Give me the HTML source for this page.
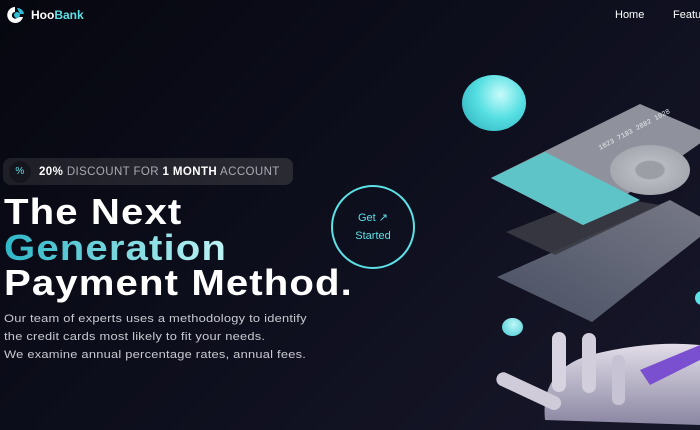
<!DOCTYPE html>
<html><head><meta charset="utf-8"><style>
*{margin:0;padding:0;box-sizing:border-box}
body{width:700px;height:430px;overflow:hidden;background:linear-gradient(135deg,#06070f 0%,#0d0e1c 45%,#17172a 100%);font-family:"Liberation Sans",sans-serif;color:#fff;position:relative}
.abs{position:absolute}
.logo{left:6px;top:6px;display:flex;align-items:center;gap:3px;font-weight:bold;font-size:12px}
.nav{top:9px;font-size:11px;color:#fff}
.badge{left:3px;top:158px;width:290px;height:27px;border-radius:8px;background:linear-gradient(90deg,#1e1f27,#2a2a33);display:flex;align-items:center;font-size:11.5px;letter-spacing:.4px;color:#a9abb3}
.badge b{color:#fff}
.h{left:4px;font-weight:bold;font-size:36.5px;letter-spacing:1px;line-height:36px;white-space:nowrap;transform:scaleX(1.1);transform-origin:left}
.p{left:4px;top:310px;font-size:11.3px;line-height:18px;color:#c8c9d0;letter-spacing:.2px;white-space:nowrap;transform:scaleX(1.14);transform-origin:left}
.btn{left:331px;top:185px;width:84px;height:84px;border-radius:50%;border:2px solid #5ce1e6;display:flex;align-items:center;justify-content:center;text-align:center;color:#5ce1e6;font-size:11px;line-height:18px}
</style></head><body>
<div class="abs logo"><svg width="22" height="18" viewBox="0 0 22 18"><path d="M9 1a8 8 0 1 0 8 10h-5a3.3 3.3 0 1 1-3-5z" fill="#fff"/><circle cx="11" cy="9" r="3" fill="#33bbcf"/><path d="M11 2a7 7 0 0 1 7 6h-4" fill="#33bbcf"/></svg><span>Hoo<span style="color:#5ce1e6">Bank</span></span></div>
<div class="abs nav" style="left:615px">Home</div>
<div class="abs nav" style="left:673px">Features</div>

<div class="abs badge"><span style="width:22px;height:22px;border-radius:50%;background:#15161d;margin:0 8px 0 6px;display:flex;align-items:center;justify-content:center;color:#5ce1e6;font-size:10px">%</span><span><b>20%</b> DISCOUNT FOR <b>1 MONTH</b> ACCOUNT</span></div>

<div class="abs h" style="top:194px">The Next</div>
<div class="abs h" style="top:230px;background:linear-gradient(90deg,#2fb7c7,#bff4f5);-webkit-background-clip:text;color:transparent">Generation</div>
<div class="abs h" style="top:265px">Payment Method.</div>
<div class="abs p">Our team of experts uses a methodology to identify<br>the credit cards most likely to fit your needs.<br>We examine annual percentage rates, annual fees.</div>

<div class="abs btn"><div>Get &#8599;<br>Started</div></div>

<div class="abs" style="left:462px;top:75px;width:64px;height:56px;border-radius:50%;background:radial-gradient(circle at 60% 35%,#c8fbfb,#55dfe2 45%,#2aa9b8)"></div>
<div class="abs" style="left:502px;top:318px;width:21px;height:18px;border-radius:50%;background:radial-gradient(circle at 55% 35%,#bdf8f8,#43c9d2)"></div>

<svg class="abs" style="left:0;top:0" width="700" height="430">
<defs>
<linearGradient id="g3" x1="0" y1="1" x2="1" y2="0"><stop offset="0" stop-color="#5a6478"/><stop offset="1" stop-color="#9a9ca8"/></linearGradient>
<radialGradient id="ring"><stop offset=".3" stop-color="#8e9099"/><stop offset=".4" stop-color="#b8bac1"/><stop offset="1" stop-color="#a6a8b0"/></radialGradient>
<linearGradient id="hand" x1="0" y1="0" x2="0" y2="1"><stop offset="0" stop-color="#e2dde8"/><stop offset="1" stop-color="#8a86a2"/></linearGradient>
</defs>
<!-- bottom card -->
<polygon points="497,277 670,200 715,225 592,322" fill="url(#g3)" opacity=".75"/>
<!-- middle dark card -->
<polygon points="506,232 600,195 660,205 555,255" fill="#3a3b44" opacity=".9"/>
<!-- top card -->
<polygon points="491,178 640,104 712,135 583,225" fill="#8f929c"/>
<polygon points="491,178 545,152 640,200 583,225" fill="#5fc4c8"/>
<ellipse cx="650" cy="170" rx="40" ry="25" fill="url(#ring)"/>
<ellipse cx="650" cy="170" rx="14" ry="9" fill="#9c9ea6"/>
<text x="600" y="150" font-size="7" fill="#e8e8ee" transform="rotate(-28 600 150)" font-family="Liberation Mono">1823 7183 2882 1028</text>
<!-- hand -->
<path d="M545 420 Q540 370 590 355 Q650 340 700 345 L700 425 Z" fill="url(#hand)"/>
<rect x="500" y="370" width="70" height="14" rx="7" fill="#cfcbd8" transform="rotate(25 500 370)"/>
<rect x="552" y="332" width="14" height="60" rx="7" fill="#d8d3e0"/>
<rect x="582" y="333" width="14" height="60" rx="7" fill="#d2cedc"/>
<rect x="612" y="355" width="13" height="50" rx="6" fill="#c8c3d4"/>
<path d="M640 370 L700 345 L700 360 L650 385 Z" fill="#7a4fd0"/>
<circle cx="702" cy="298" r="7" fill="#5ce1e6"/>
</svg>
</body></html>
